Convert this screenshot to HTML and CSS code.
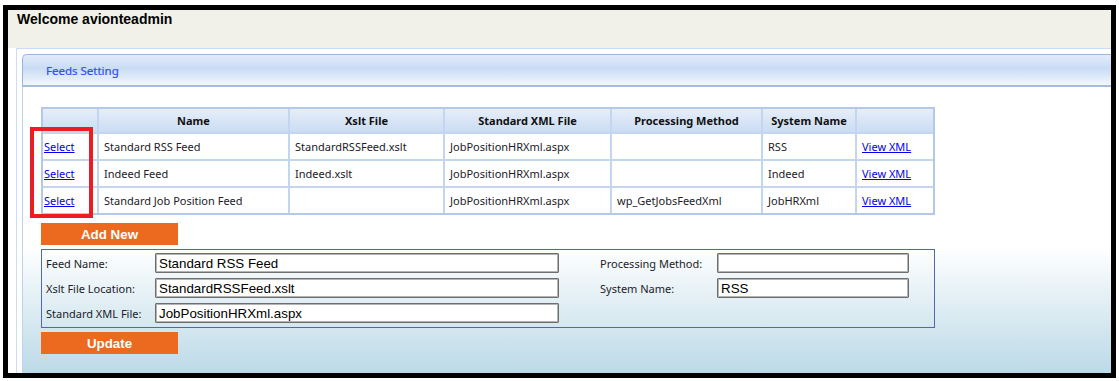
FILE: index.html
```html
<!DOCTYPE html>
<html lang="en">
<head>
    <meta charset="UTF-8">
    <meta name="viewport" content="width=device-width, initial-scale=1.0">
    <title>Feeds Setting</title>
    <link rel="stylesheet" href="styles.css">
</head>
<body>
    <div class="frame">
        <div class="welcome">Welcome avionteadmin</div>

        <div class="main">
            <div class="panel">
                <div class="panel-head">Feeds Setting</div>

                <div class="panel-body">
                    <!-- Feeds grid -->
                    <table class="grid">
                        <colgroup>
                            <col style="width: 54px">
                            <col style="width: 191px">
                            <col style="width: 155px">
                            <col style="width: 167px">
                            <col style="width: 151px">
                            <col style="width: 94px">
                            <col>
                        </colgroup>
                        <tr>
                            <th></th>
                            <th>Name</th>
                            <th>Xslt File</th>
                            <th>Standard XML File</th>
                            <th>Processing Method</th>
                            <th>System Name</th>
                            <th></th>
                        </tr>
                        <tr>
                            <td class="first"><a href="#">Select</a></td>
                            <td>Standard RSS Feed</td>
                            <td>StandardRSSFeed.xslt</td>
                            <td>JobPositionHRXml.aspx</td>
                            <td></td>
                            <td>RSS</td>
                            <td><a href="#">View XML</a></td>
                        </tr>
                        <tr>
                            <td class="first"><a href="#">Select</a></td>
                            <td>Indeed Feed</td>
                            <td>Indeed.xslt</td>
                            <td>JobPositionHRXml.aspx</td>
                            <td></td>
                            <td>Indeed</td>
                            <td><a href="#">View XML</a></td>
                        </tr>
                        <tr>
                            <td class="first"><a href="#">Select</a></td>
                            <td>Standard Job Position Feed</td>
                            <td></td>
                            <td>JobPositionHRXml.aspx</td>
                            <td>wp_GetJobsFeedXml</td>
                            <td>JobHRXml</td>
                            <td><a href="#">View XML</a></td>
                        </tr>
                    </table>

                    <button class="btn btn-add">Add New</button>

                    <!-- Edit form -->
                    <div class="editor">
                        <div class="fields fields-left">
                            <label for="feed-name">Feed Name:</label>
                            <input type="text" id="feed-name" value="Standard RSS Feed">
                            <label for="xslt-file">Xslt File Location:</label>
                            <input type="text" id="xslt-file" value="StandardRSSFeed.xslt">
                            <label for="xml-file">Standard XML File:</label>
                            <input type="text" id="xml-file" value="JobPositionHRXml.aspx">
                        </div>
                        <div class="fields fields-right">
                            <label for="proc-method">Processing Method:</label>
                            <input type="text" id="proc-method" value="">
                            <label for="system-name">System Name:</label>
                            <input type="text" id="system-name" value="RSS">
                        </div>
                    </div>

                    <button class="btn btn-update">Update</button>
                </div>
            </div>
        </div>
    </div>

    <!-- Annotation drawn over the Select column -->
    <div class="callout"></div>
</body>
</html>
```

FILE: styles.css
```css
body {
    margin: 0;
    background-color: #fff;
    font-family: "Noto Sans", sans-serif;
}

.frame {
    margin: 5px 0 0 3px;
    width: 1103px;
    height: 363px;
    border: 5px solid #000;
    overflow: hidden;
    display: flex;
    flex-direction: column;
}

.welcome {
    height: 38px;
    box-sizing: border-box;
    padding: 1px 0 0 9px;
    background-color: #f1f1e9;
    font-family: "Liberation Sans", Arial, sans-serif;
    font-weight: bold;
    font-size: 14px;
    line-height: 16px;
    color: #000;
}

.main {
    flex-grow: 1;
    margin-left: 8px;
    border-top: 1px solid #c9ddf5;
    border-left: 1px solid #c9ddf5;
    padding: 5px 0 0 5px;
    display: flex;
    min-height: 0;
}

.panel {
    flex-grow: 1;
    display: flex;
    flex-direction: column;
}

.panel-head {
    height: 28px;
    padding: 2px 0 0 23px;
    border: 1px solid #9ab6de;
    border-right: none;
    border-bottom: 2px solid #a6bcdb;
    border-top-left-radius: 5px;
    background: linear-gradient(#e2ecf9, #c9dcf5 45%, #f2f7fd);
    font-size: 11.5px;
    line-height: 28px;
    color: #2f50f0;
    -webkit-text-stroke: 0.2px #2f50f0;
}

.panel-body {
    flex-grow: 1;
    border-left: 1px solid #bcd4f0;
    border-bottom: 1px solid #b6d8f0;
    padding: 20px 0 0 18px;
    background: linear-gradient(#fff 56%, #bcdae7);
}

/* Grid */
.grid {
    width: 894px;
    table-layout: fixed;
    border-spacing: 0;
    border: 2px solid #b4c9e8;
    background-color: #fff;
    font-size: 11px;
    color: #221a28;
}

.grid th {
    height: 23px;
    padding: 0;
    font-weight: bold;
    text-align: center;
    color: #111;
    background: linear-gradient(#e6eef9, #cbdcf3);
    border-left: 2px solid #c4d6ef;
}

.grid td {
    height: 25px;
    padding: 0 4px 0 5px;
    white-space: nowrap;
    border-left: 2px solid #c4d6ef;
    border-top: 2px solid #c4d6ef;
}

.grid th:first-child,
.grid td.first {
    border-left: none;
    padding-left: 1px;
}

.grid a {
    color: #0000ee;
    text-decoration: underline;
}

/* Buttons */
.btn {
    display: block;
    width: 137px;
    height: 22px;
    padding: 0;
    border: none;
    background-color: #ec6a1f;
    color: #fff;
    font-family: "Liberation Sans", Arial, sans-serif;
    font-weight: bold;
    font-size: 13.33px;
    cursor: pointer;
}

.btn-add {
    margin-top: 8px;
}

.btn-update {
    margin-top: 4px;
}

/* Edit form */
.editor {
    width: 894px;
    box-sizing: border-box;
    margin-top: 4px;
    padding: 3px 4px 4px 4px;
    border: 1px solid #5468a8;
    display: flex;
    align-items: flex-start;
}

.fields {
    display: grid;
    row-gap: 5px;
    align-items: center;
}

.fields-left {
    grid-template-columns: 109px 404px;
}

.fields-right {
    margin-left: 41px;
    grid-template-columns: 117px 192px;
}

.fields label {
    font-size: 11px;
    color: #221a28;
}

.fields input {
    height: 20px;
    box-sizing: border-box;
    margin: 0;
    padding: 0 3px;
    border: 1px solid #6e6e6e;
    box-shadow: inset 0 0 0 1px #b4b4b4;
    border-radius: 1px;
    font-family: "Liberation Sans", Arial, sans-serif;
    font-size: 13.33px;
    color: #000;
    background-color: #fff;
}

.callout {
    position: absolute;
    left: 30px;
    top: 127px;
    width: 63px;
    height: 91px;
    box-sizing: border-box;
    border: 4px solid #ec1c24;
}
```
